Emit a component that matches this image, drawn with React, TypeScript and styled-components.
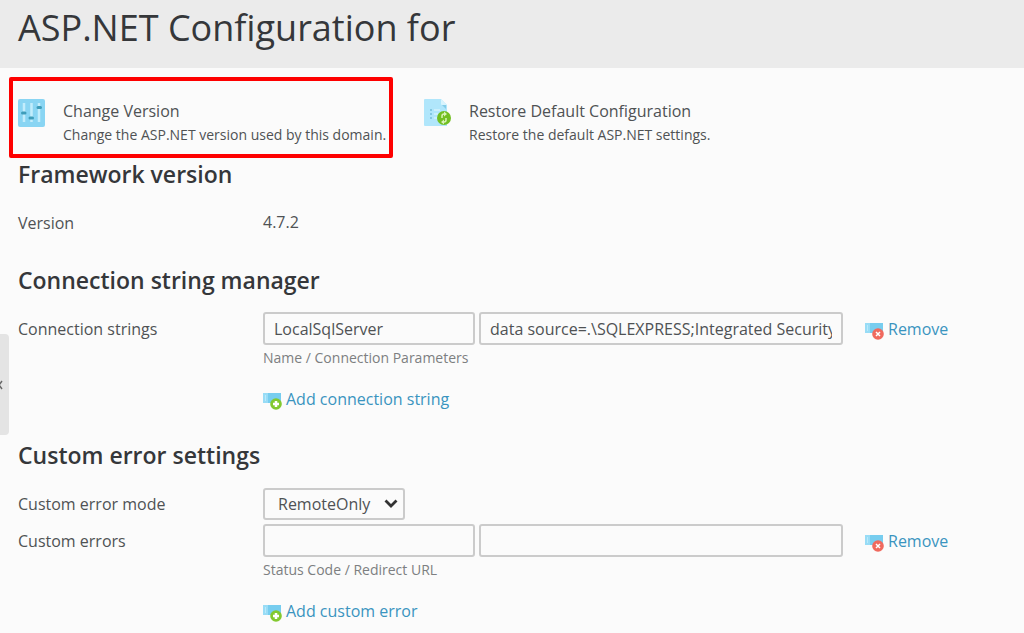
import React from 'react';
import styled, { createGlobalStyle, css } from 'styled-components';

const GlobalStyle = createGlobalStyle`
  *, *::before, *::after { box-sizing: border-box; }
  body {
    margin: 0;
    background: #fbfbfb;
    color: #4f5254;
    font-family: "Open Sans", "Noto Sans", sans-serif;
    font-size: 16px;
    line-height: 22px;
  }
`;

const Page = styled.div`
  position: relative;
  overflow: hidden;
`;

const Header = styled.header`
  padding: 4px 18px 16px;
  background: #ebebeb;
`;

const Title = styled.h1`
  margin: 0;
  color: #35373a;
  font-size: 36px;
  font-weight: 400;
  line-height: 48px;
`;

const SidebarHandle = styled.button`
  position: absolute;
  top: 334px;
  left: 0;
  display: flex;
  align-items: center;
  width: 9px;
  height: 101px;
  padding: 0;
  border: 0;
  border-radius: 0 4px 4px 0;
  background: #e4e4e4;
  color: #666;
`;

const Tools = styled.nav`
  display: flex;
  gap: 22px;
  padding: 9px 9px 0;
`;

const Tool = styled.a<{ $highlighted?: boolean }>`
  display: flex;
  flex: 0 1 384px;
  gap: 18px;
  padding: 18px 2px 8px 5px;
  border: 4px solid transparent;
  border-radius: 2px;
  color: inherit;
  text-decoration: none;
  ${(p) => p.$highlighted && css`border-color: #fe0000;`}
`;

const ToolName = styled.span`
  display: block;
  line-height: 24px;
`;

const ToolHint = styled.span`
  display: block;
  font-size: 14px;
  line-height: 23px;
`;

const Main = styled.main`
  padding: 0 18px;
`;

const Section = styled.section`
  margin-bottom: 24px;
`;

const Heading = styled.h2`
  margin: 0 0 16px;
  color: #35373a;
  font-size: 23px;
  font-weight: 600;
  line-height: 32px;
`;

const Row = styled.div`
  display: grid;
  grid-template-columns: 245px minmax(0, 1fr);

  & + & { margin-top: 3px; }
`;

const Label = styled.label`
  padding: 6px 0;
`;

const Value = styled.div`
  padding: 5px 0 7px;
`;

const Fields = styled.div`
  display: flex;
  align-items: center;
  gap: 4px;
`;

const TextInput = styled.input<{ $basis: number }>`
  flex: 0 1 ${(p) => p.$basis}px;
  min-width: 0;
  height: 33px;
  padding: 0 9px;
  border: 2px solid #cbcbcb;
  border-radius: 3px;
  background: #fbfbfb;
  color: inherit;
  font: inherit;
`;

const Hint = styled.p`
  margin: 3px 0 16px;
  color: #7d7f81;
  font-size: 14px;
  line-height: 20px;
`;

const ActionLink = styled.a<{ $spaced?: boolean }>`
  display: inline-flex;
  align-items: center;
  gap: 4px;
  margin-left: ${(p) => (p.$spaced ? 18 : 0)}px;
  color: #3a94bf;
  line-height: 30px;
  text-decoration: none;

  svg { margin-top: 4px; }
`;

const SelectBox = styled.div`
  display: inline-grid;
  grid-template-columns: 142px;
  align-items: center;

  > * { grid-area: 1 / 1; }
  > svg { justify-self: end; margin-right: 7px; pointer-events: none; }
`;

const Select = styled.select`
  height: 32px;
  padding: 0 26px 0 13px;
  appearance: none;
  border: 2px solid #cbcbcb;
  border-radius: 3px;
  background: #fbfbfb;
  color: inherit;
  font: inherit;
`;

const SlidersIcon = () => (
  <svg width="27" height="28" viewBox="0 0 27 28" aria-hidden="true">
    <rect width="27" height="28" rx="2" fill="#89d5f3" />
    <path d="M6 4v19M13.500 4v19M21 4v19" stroke="#c3edfc" strokeWidth="2.500" />
    <path d="M4.500 14h2.500M12 19h2.500M20 8.500h2.500" stroke="#3f9dba" strokeWidth="3" strokeLinecap="round" />
  </svg>
);

const RestoreIcon = () => (
  <svg width="27" height="28" viewBox="0 0 27 28" aria-hidden="true">
    <path d="M1 0h16l6 6v21H1a1 1 0 0 1-1-1V1a1 1 0 0 1 1-1z" fill="#b0e6fb" />
    <path d="M17 0l6 6h-5a1 1 0 0 1-1-1z" fill="#d9f4fd" />
    <path d="M18 6h4v4z" fill="#83cce8" />
    <path d="M7 10v2M7 14v2M7 18v2" stroke="#83c8e2" strokeWidth="2" />
    <path d="M10 11h6M10 15h4M10 19h3" stroke="#cbeffc" strokeWidth="2" />
    <circle cx="20" cy="19" r="7" fill="#72bf22" />
    <path d="M18 19v-2q0-2 2-2h1M22 19v2q0 2-2 2h-1" fill="none" stroke="#d9f2b8" strokeWidth="1.500" />
    <path d="M20 12.500l3 2.500-3 2.500zM20 20.500l-3 2.500 3 2.500z" fill="#d9f2b8" />
  </svg>
);

const RecordIcon = ({ kind }: { kind: 'add' | 'remove' }) => (
  <svg width="19" height="18" viewBox="0 0 19 18" aria-hidden="true">
    <path d="M0 1h18v10H0z" fill="#77cdef" />
    <path d="M0 1h5v10H0z" fill="#98dcf6" />
    <path d="M2.500 3v6" stroke="#b9eafb" strokeWidth="1" />
    <circle cx="13" cy="12" r="5.800" fill={kind === 'add' ? '#83c92f' : '#f0695e'} />
    {kind === 'add' ? (
      <path d="M13 9v6M10 12h6" stroke="#fff" strokeWidth="2.500" />
    ) : (
      <path d="M11 10l4 4M15 10l-4 4" stroke="#fff" strokeWidth="1.500" />
    )}
  </svg>
);

export default function App() {
  return (
    <Page>
      <GlobalStyle />
      <Header>
        <Title>ASP.NET Configuration for</Title>
      </Header>
      <SidebarHandle aria-label="Collapse sidebar">
        <svg width="3" height="10" viewBox="0 0 3 10" aria-hidden="true">
          <path d="M2 1L-1 5l3 4" fill="none" stroke="currentColor" strokeWidth="1.500" />
        </svg>
      </SidebarHandle>
      <Tools>
        <Tool href="#version" $highlighted>
          <SlidersIcon />
          <span>
            <ToolName>Change Version</ToolName>
            <ToolHint>Change the ASP.NET version used by this domain.</ToolHint>
          </span>
        </Tool>
        <Tool href="#restore">
          <RestoreIcon />
          <span>
            <ToolName>Restore Default Configuration</ToolName>
            <ToolHint>Restore the default ASP.NET settings.</ToolHint>
          </span>
        </Tool>
      </Tools>
      <Main>
        <Section>
          <Heading>Framework version</Heading>
          <Row>
            <Label as="span">Version</Label>
            <Value>4.7.2</Value>
          </Row>
        </Section>
        <Section>
          <Heading>Connection string manager</Heading>
          <Row>
            <Label htmlFor="connection-name">Connection strings</Label>
            <div>
              <Fields>
                <TextInput id="connection-name" $basis={212} defaultValue="LocalSqlServer" />
                <TextInput
                  $basis={364}
                  aria-label="Connection parameters"
                  defaultValue="data source=.\SQLEXPRESS;Integrated Security=SSPI"
                />
                <ActionLink href="#remove-connection" $spaced>
                  <RecordIcon kind="remove" />
                  Remove
                </ActionLink>
              </Fields>
              <Hint>Name / Connection Parameters</Hint>
              <ActionLink href="#add-connection">
                <RecordIcon kind="add" />
                Add connection string
              </ActionLink>
            </div>
          </Row>
        </Section>
        <Section>
          <Heading>Custom error settings</Heading>
          <Row>
            <Label htmlFor="error-mode">Custom error mode</Label>
            <SelectBox>
              <Select id="error-mode" defaultValue="RemoteOnly">
                <option>RemoteOnly</option>
                <option>On</option>
                <option>Off</option>
              </Select>
              <svg width="14" height="10" viewBox="0 0 14 10" aria-hidden="true">
                <path d="M1.500 1.500L7 7l5.500-5.500" fill="none" stroke="#333" strokeWidth="2.800" />
              </svg>
            </SelectBox>
          </Row>
          <Row>
            <Label htmlFor="error-code">Custom errors</Label>
            <div>
              <Fields>
                <TextInput id="error-code" $basis={212} />
                <TextInput $basis={364} aria-label="Redirect URL" />
                <ActionLink href="#remove-error" $spaced>
                  <RecordIcon kind="remove" />
                  Remove
                </ActionLink>
              </Fields>
              <Hint>Status Code / Redirect URL</Hint>
              <ActionLink href="#add-error">
                <RecordIcon kind="add" />
                Add custom error
              </ActionLink>
            </div>
          </Row>
        </Section>
      </Main>
    </Page>
  );
}
